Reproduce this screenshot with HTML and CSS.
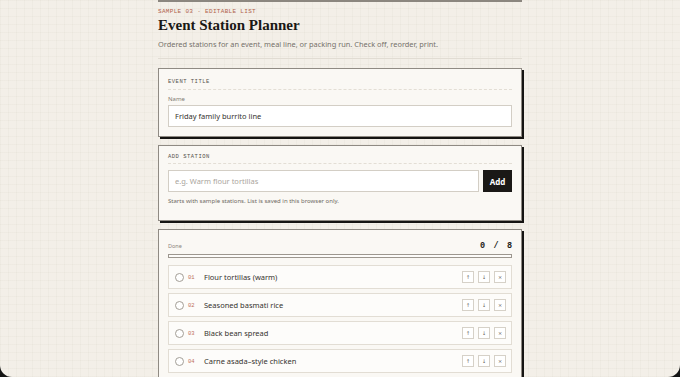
FILE: index.html
```html
<!DOCTYPE html>
<html lang="en">
<head>
<meta charset="utf-8">
<title>Event Station Planner</title>
<link rel="stylesheet" href="styles.css">
</head>
<body>
<div class="frame">
  <main class="column">
    <div class="topbar"></div>
    <p class="eyebrow">SAMPLE 03 · EDITABLE LIST</p>
    <h1 class="title">Event Station Planner</h1>
    <p class="subtitle">Ordered stations for an event, meal line, or packing run. Check off, reorder, print.</p>
    <hr class="divider">

    <section class="card card-title">
      <div class="card-label">EVENT TITLE</div>
      <label class="field-label">Name</label>
      <input class="text-input" type="text" value="Friday family burrito line">
    </section>

    <section class="card card-add">
      <div class="card-label">ADD STATION</div>
      <div class="add-row">
        <input class="text-input" type="text" placeholder="e.g. Warm flour tortillas">
        <button class="add-btn">Add</button>
      </div>
      <p class="helper">Starts with sample stations. List is saved in this browser only.</p>
    </section>

    <section class="card card-list">
      <div class="progress-head">
        <span class="done-label">Done</span>
        <span class="count">0 / 8</span>
      </div>
      <div class="progress"><div class="progress-fill" style="width:0%"></div></div>
      <ul class="rows">
        <li class="row"><span class="check"></span><span class="num">01</span><span class="name">Flour tortillas (warm)</span><span class="actions"><button class="mini">↑</button><button class="mini">↓</button><button class="mini">×</button></span></li>
        <li class="row"><span class="check"></span><span class="num">02</span><span class="name">Seasoned basmati rice</span><span class="actions"><button class="mini">↑</button><button class="mini">↓</button><button class="mini">×</button></span></li>
        <li class="row"><span class="check"></span><span class="num">03</span><span class="name">Black bean spread</span><span class="actions"><button class="mini">↑</button><button class="mini">↓</button><button class="mini">×</button></span></li>
        <li class="row"><span class="check"></span><span class="num">04</span><span class="name">Carne asada–style chicken</span><span class="actions"><button class="mini">↑</button><button class="mini">↓</button><button class="mini">×</button></span></li>
        <li class="row"><span class="check"></span><span class="num">05</span><span class="name">Sautéed peppers &amp; onions</span><span class="actions"><button class="mini">↑</button><button class="mini">↓</button><button class="mini">×</button></span></li>
        <li class="row"><span class="check"></span><span class="num">06</span><span class="name">Salsa &amp; pico de gallo</span><span class="actions"><button class="mini">↑</button><button class="mini">↓</button><button class="mini">×</button></span></li>
        <li class="row"><span class="check"></span><span class="num">07</span><span class="name">Shredded cheese</span><span class="actions"><button class="mini">↑</button><button class="mini">↓</button><button class="mini">×</button></span></li>
        <li class="row"><span class="check"></span><span class="num">08</span><span class="name">Sour cream &amp; guacamole</span><span class="actions"><button class="mini">↑</button><button class="mini">↓</button><button class="mini">×</button></span></li>
      </ul>
    </section>
  </main>
</div>
</body>
</html>
```

FILE: styles.css
```css
html {
  background: #141414;
}
body {
  margin: 0;
}
.frame {
  height: 377px;
  overflow: hidden;
  border-radius: 0 0 12px 12px;
  background-color: #f3efe8;
  background-image:
    linear-gradient(to right, rgba(120, 100, 70, 0.035) 1px, transparent 1px),
    linear-gradient(to bottom, rgba(120, 100, 70, 0.035) 1px, transparent 1px);
  background-size: 8px 8px;
  font-family: "Noto Sans", "Liberation Sans", sans-serif;
  color: #1f1d1a;
}
.column {
  width: 364px;
  margin: 0 auto;
  display: flex;
  flex-direction: column;
}
.topbar {
  height: 2px;
  background: #8b867f;
}
.eyebrow {
  margin: 6px 0 0;
  font-family: "Liberation Mono", monospace;
  font-size: 6px;
  line-height: 8px;
  letter-spacing: 0.32px;
  color: #b0624c;
}
.title {
  margin: 0;
  font-family: "Liberation Serif", serif;
  font-weight: bold;
  font-size: 15px;
  line-height: 19px;
  color: #1a1815;
}
.subtitle {
  margin: 4px 0 0;
  font-size: 7.4px;
  line-height: 10px;
  color: #76716a;
}
.divider {
  margin: 9px 0 0;
  border: 0;
  height: 1px;
  background: #e1dcd3;
}
.card {
  margin-top: 9px;
  background: #faf8f4;
  border: 1px solid #8f8a83;
  box-shadow: 2px 2px 0 #151412;
  padding: 9px;
  display: flex;
  flex-direction: column;
}
.card-label {
  font-family: "Liberation Mono", monospace;
  font-size: 5.5px;
  line-height: 8px;
  letter-spacing: 0.5px;
  color: #55514b;
  padding-bottom: 3px;
  border-bottom: 1px dashed #e3ded5;
}
.field-label {
  margin-top: 5px;
  font-size: 6px;
  line-height: 8px;
  color: #817b73;
}
.text-input {
  margin-top: 2px;
  box-sizing: border-box;
  height: 22px;
  width: 100%;
  border: 1px solid #d3cec5;
  background: #ffffff;
  padding: 0 6px;
  font-family: "Noto Sans", "Liberation Sans", sans-serif;
  font-size: 7.5px;
  color: #35322e;
  outline: none;
}
.text-input::placeholder {
  color: #aaa59d;
}
.card-add {
  margin-top: 8px;
  padding-top: 7px;
  padding-bottom: 15px;
}
.card-add .card-label {
  padding-bottom: 2px;
}
.add-row {
  margin-top: 6px;
  display: flex;
  gap: 4px;
}
.add-row .text-input {
  margin-top: 0;
  flex: 1;
}
.add-btn {
  width: 29px;
  height: 22px;
  border: 0;
  padding: 0;
  background: #1a1816;
  color: #ffffff;
  font-family: "Noto Sans", "Liberation Sans", sans-serif;
  font-weight: bold;
  font-size: 8px;
}
.helper {
  margin: 5px 0 0;
  font-size: 6px;
  line-height: 8px;
  color: #6f6a63;
}
.card-list {
  margin-top: 8px;
  padding-top: 10px;
}
.progress-head {
  display: flex;
  justify-content: space-between;
  align-items: center;
  height: 11px;
}
.done-label {
  font-size: 5.5px;
  color: #8a847c;
}
.count {
  font-family: "Liberation Mono", monospace;
  font-weight: bold;
  font-size: 8.5px;
  letter-spacing: 1.6px;
  margin-right: -1.6px;
  color: #1f1d1a;
}
.progress {
  margin-top: 3px;
  height: 4px;
  box-sizing: border-box;
  border: 1px solid #9d978f;
  background: #fdfcfa;
}
.progress-fill {
  height: 100%;
  background: #1a1816;
}
.rows {
  list-style: none;
  margin: 7px 0 0;
  padding: 0;
  display: flex;
  flex-direction: column;
  gap: 4px;
}
.row {
  box-sizing: border-box;
  height: 24px;
  border: 1px solid #e2ddd4;
  background: #fdfcfa;
  display: flex;
  align-items: center;
  padding: 0 5px 0 6px;
}
.check {
  width: 9px;
  height: 9px;
  box-sizing: border-box;
  border: 1px solid #a39e96;
  border-radius: 50%;
  background: #ffffff;
}
.num {
  margin-left: 4px;
  width: 16px;
  font-family: "Liberation Mono", monospace;
  font-size: 5.5px;
  color: #c0705c;
}
.name {
  flex: 1;
  font-size: 7.5px;
  color: #35322e;
}
.actions {
  display: flex;
  gap: 4px;
}
.mini {
  width: 12px;
  height: 12px;
  box-sizing: border-box;
  padding: 0;
  border: 1px solid #d6d1c8;
  background: #ffffff;
  font-family: "DejaVu Sans", sans-serif;
  font-size: 5px;
  line-height: 10px;
  color: #5a5650;
}
```
